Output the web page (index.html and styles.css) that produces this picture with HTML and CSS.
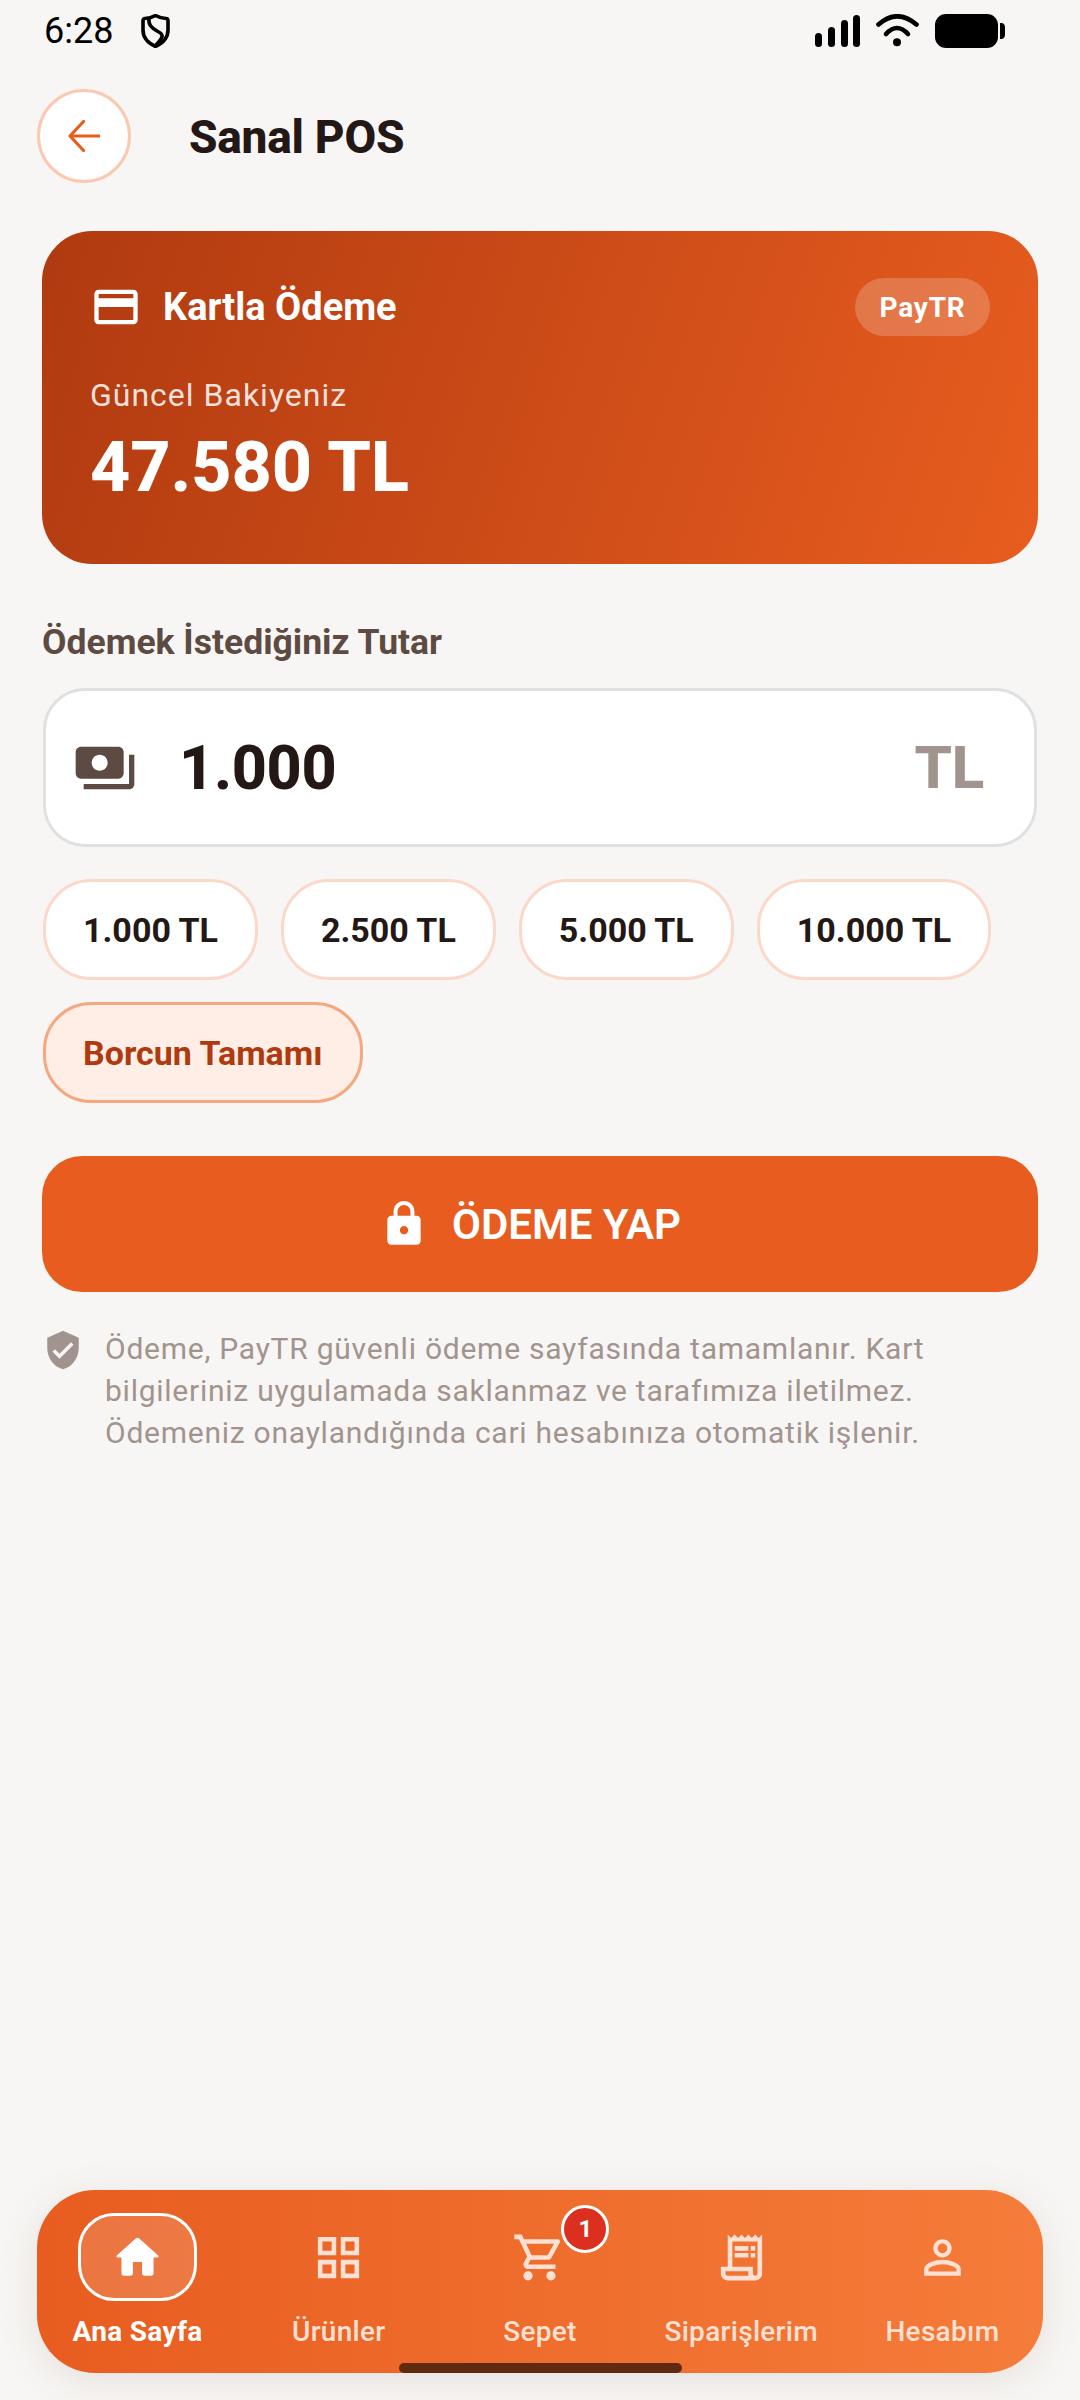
FILE: index.html
```html
<!DOCTYPE html>
<html lang="tr">
<head>
<meta charset="utf-8">
<title>Sanal POS</title>
<link rel="stylesheet" href="styles.css">
</head>
<body>
<div class="screen">
  <div class="status">
    <span class="time">6:28</span>
    <svg class="shield-st" viewBox="0 0 29 34"><path d="M14.5 1.5 C18 3.5 22 4.5 25 4.5 C26.5 4.5 27 5.5 27 7 V16 C27 24 21 29.5 14.5 32.5 C8 29.5 2 24 2 16 V7 C2 5.5 2.5 4.5 4 4.5 C7 4.5 11 3.5 14.5 1.5 Z" fill="none" stroke="#000" stroke-width="3.6" stroke-linejoin="round"/><path d="M8 4 C7 11 11 14 16 17 C22 20 24 22 15 31" fill="none" stroke="#000" stroke-width="3.6"/></svg>
    <span class="status-gap"></span>
    <svg class="signal" viewBox="0 0 46 32"><g fill="#000"><rect x="0" y="18" width="7" height="14" rx="3.5"/><rect x="13" y="12" width="7" height="20" rx="3.5"/><rect x="26" y="5" width="7" height="27" rx="3.5"/><rect x="38" y="0" width="7" height="32" rx="3.5"/></g></svg>
    <svg class="wifi" viewBox="0 0 43 33"><g fill="none" stroke="#000" stroke-width="4.6" stroke-linecap="round"><path d="M2.5 10.5 Q21 -5.9 40.5 10.5"/><path d="M10 20 Q21 8 32 20"/></g><circle cx="21" cy="28.3" r="4" fill="#000"/></svg>
    <svg class="battery" viewBox="0 0 70 34"><rect x="0" y="0" width="63" height="34" rx="11" fill="#000"/><path d="M65 9h1.5c2 0 3.5 2 3.5 4v8c0 2-1.5 4-3.5 4H65z" fill="#000"/></svg>
  </div>

  <div class="header">
    <button class="back" type="button" aria-label="Geri">
      <svg viewBox="0 0 32 32" class="back-ic"><path d="M31 16H2M15.5 1.5 2 16l13.5 14.5" fill="none" stroke="#E85D1F" stroke-width="3.2" stroke-linecap="round" stroke-linejoin="round"/></svg>
    </button>
    <h1 class="title">Sanal POS</h1>
  </div>

  <main class="content">
    <section class="card">
      <div class="card-top">
        <svg class="ic-card" viewBox="0 0 24 24"><path fill="#fff" d="M20 4H4c-1.11 0-1.99.89-1.99 2L2 18c0 1.11.89 2 2 2h16c1.11 0 2-.89 2-2V6c0-1.11-.89-2-2-2zm0 14H4v-6h16v6zm0-10H4V6h16v2z"/></svg>
        <span class="card-title">Kartla Ödeme</span>
        <span class="paytr">PayTR</span>
      </div>
      <div class="balance-label">Güncel Bakiyeniz</div>
      <div class="balance">47.580 TL</div>
    </section>

    <label class="amount-label">Ödemek İstediğiniz Tutar</label>
    <div class="amount-box">
      <svg class="ic-pay" viewBox="0 0 24 24"><path fill="#5D4A42" d="M19 14V6c0-1.1-.9-2-2-2H3c-1.1 0-2 .9-2 2v8c0 1.1.9 2 2 2h14c1.1 0 2-.9 2-2zm-9-1c-1.66 0-3-1.34-3-3s1.34-3 3-3 3 1.34 3 3-1.34 3-3 3zm13-6v11c0 1.1-.9 2-2 2H4v-2h17V7h2z"/></svg>
      <span class="amount-value">1.000</span>
      <span class="amount-unit">TL</span>
    </div>

    <div class="chips">
      <span class="chip">1.000 TL</span>
      <span class="chip">2.500 TL</span>
      <span class="chip">5.000 TL</span>
      <span class="chip">10.000 TL</span>
      <span class="chip chip-active">Borcun Tamamı</span>
    </div>

    <button class="pay" type="button">
      <svg class="ic-lock" viewBox="0 0 24 24"><path fill="#fff" d="M18 8h-1V6c0-2.76-2.24-5-5-5S7 3.24 7 6v2H6c-1.1 0-2 .9-2 2v10c0 1.1.9 2 2 2h12c1.1 0 2-.9 2-2V10c0-1.1-.9-2-2-2zm-6 9c-1.1 0-2-.9-2-2s.9-2 2-2 2 .9 2 2-.9 2-2 2zm3.1-9H8.9V6c0-1.71 1.39-3.1 3.1-3.1 1.71 0 3.1 1.39 3.1 3.1v2z"/></svg>
      <span>ÖDEME YAP</span>
    </button>

    <div class="note">
      <svg class="ic-verified" viewBox="0 0 24 24"><path fill="#A1948E" d="M12 1L3 5v6c0 5.55 3.84 10.74 9 12 5.16-1.26 9-6.45 9-12V5l-9-4zm-2 16l-4-4 1.41-1.41L10 14.17l6.59-6.59L18 9l-8 8z"/></svg>
      <p class="note-text">Ödeme, PayTR güvenli ödeme sayfasında tamamlanır. Kart<br>bilgileriniz uygulamada saklanmaz ve tarafımıza iletilmez.<br>Ödemeniz onaylandığında cari hesabınıza otomatik işlenir.</p>
    </div>
  </main>

  <nav class="nav">
    <div class="nav-item nav-active">
      <span class="nav-icon pill">
        <svg class="nav-svg" viewBox="0 0 24 24"><path fill="#fff" d="M10 19v-5h4v5c0 .55.45 1 1 1h3c.55 0 1-.45 1-1v-7h1.7c.46 0 .68-.57.33-.87L12.67 3.6c-.38-.34-.96-.34-1.34 0l-8.36 7.53c-.34.3-.13.87.33.87H5v7c0 .55.45 1 1 1h3c.55 0 1-.45 1-1z"/></svg>
      </span>
      <span class="nav-label">Ana Sayfa</span>
    </div>
    <div class="nav-item">
      <span class="nav-icon">
        <svg class="nav-svg" viewBox="0 0 24 24"><path class="soft" d="M3 3v8h8V3H3zm6 6H5V5h4v4zm-6 4v8h8v-8H3zm6 6H5v-4h4v4zm4-16v8h8V3h-8zm6 6h-4V5h4v4zm-6 4v8h8v-8h-8zm6 6h-4v-4h4v4z"/></svg>
      </span>
      <span class="nav-label">Ürünler</span>
    </div>
    <div class="nav-item">
      <span class="nav-icon">
        <svg class="nav-svg" viewBox="0 0 24 24"><path class="soft" d="M15.55 13c.75 0 1.41-.41 1.75-1.03l3.58-6.49c.37-.66-.11-1.48-.87-1.48H5.21l-.94-2H1v2h2l3.6 7.59-1.35 2.44C4.52 15.37 5.48 17 7 17h12v-2H7l1.1-2h7.45zM6.16 6h12.15l-2.76 5H8.53L6.16 6zM7 18c-1.1 0-1.99.9-1.99 2S5.9 22 7 22s2-.9 2-2-.9-2-2-2zm10 0c-1.1 0-1.99.9-1.99 2s.89 2 1.99 2 2-.9 2-2-.9-2-2-2z"/></svg>
        <span class="badge">1</span>
      </span>
      <span class="nav-label">Sepet</span>
    </div>
    <div class="nav-item">
      <span class="nav-icon">
        <svg class="nav-svg" viewBox="0 0 24 24"><path class="soft" d="M19.5 3.5L18 2l-1.5 1.5L15 2l-1.5 1.5L12 2l-1.5 1.5L9 2 7.5 3.5 6 2v14H3v3c0 1.66 1.34 3 3 3h12c1.66 0 3-1.34 3-3V2l-1.5 1.5zM19 19c0 .55-.45 1-1 1s-1-.45-1-1v-3H8V5h11v14zM5 19v-1h10v2H6c-.55 0-1-.45-1-1zM9 7h6v2H9zM16 7h2v2h-2zM9 10h6v2H9zM16 10h2v2h-2z"/></svg>
      </span>
      <span class="nav-label">Siparişlerim</span>
    </div>
    <div class="nav-item">
      <span class="nav-icon">
        <svg class="nav-svg" viewBox="0 0 24 24"><path class="soft" d="M12 5.9c1.16 0 2.1.94 2.1 2.1s-.94 2.1-2.1 2.1S9.9 9.16 9.9 8s.94-2.1 2.1-2.1m0 9c2.97 0 6.1 1.46 6.1 2.1v1.1H5.9V17c0-.64 3.13-2.1 6.1-2.1M12 4C9.79 4 8 5.79 8 8s1.79 4 4 4 4-1.79 4-4-1.79-4-4-4zm0 9c-2.67 0-8 1.34-8 4v3h16v-3c0-2.66-5.33-4-8-4z"/></svg>
      </span>
      <span class="nav-label">Hesabım</span>
    </div>
    <span class="home-bar"></span>
  </nav>
</div>
</body>
</html>
```

FILE: styles.css
```css
* { box-sizing: border-box; }
html, body { margin: 0; padding: 0; }
body { font-family: Roboto, "Noto Sans", sans-serif; background: #F8F6F4; }
.screen { position: relative; width: 1080px; height: 2400px; display: flex; flex-direction: column; background: #F8F6F4; color: #231815; overflow: hidden; }

.status { height: 62px; padding: 14px 75px 0 44px; display: flex; align-items: flex-start; flex: none; }
.time { font-size: 36px; line-height: 34px; color: #000; width: 97px; }
.shield-st { width: 29px; height: 34px; }
.status-gap { flex: 1; }
.signal { width: 46px; height: 32px; margin-top: 1px; }
.wifi { width: 43px; height: 33px; margin: 0 16px 0 15px; }
.battery { width: 70px; height: 34px; }

.header { display: flex; align-items: center; gap: 58px; margin: 27px 0 0 37px; flex: none; }
.back { width: 94px; height: 94px; border-radius: 50%; background: #fff; border: 3px solid #FBC9B0; padding: 0; display: flex; align-items: center; justify-content: center; }
.back-ic { width: 32px; height: 32px; margin-left: -1px; }
.title { margin: 2px 0 0; font-size: 46px; line-height: 54px; font-weight: 800; letter-spacing: -.25px; color: #231815; }

.content { flex: 1; padding: 48px 42px 0; display: flex; flex-direction: column; align-items: stretch; }
.card { height: 333px; border-radius: 50px; padding: 47px 48px 0; color: #fff; background: linear-gradient(108.5deg, #B03A10, #E85D1F); }
.card-top { display: flex; align-items: center; height: 58px; }
.ic-card { width: 52px; height: 52px; margin-right: 21px; flex: none; }
.card-title { font-size: 38px; font-weight: 700; flex: 1; }
.paytr { width: 135px; height: 58px; border-radius: 29px; background: rgba(255,255,255,.2); font-size: 28px; font-weight: 700; letter-spacing: .8px; display: flex; align-items: center; justify-content: center; }
.balance-label { margin-top: 41px; font-size: 32px; line-height: 36px; letter-spacing: 1px; color: rgba(255,255,255,.85); }
.balance { margin-top: 13px; font-size: 70px; line-height: 82px; font-weight: 800; letter-spacing: -.1px; }

.amount-label { margin-top: 57px; font-size: 35.5px; line-height: 42px; font-weight: 700; color: #5D4A42; display: block; }
.amount-box { margin: 25px 1px 0; height: 159px; border-radius: 42px; background: #fff; border: 3px solid #E0E0E0; display: flex; align-items: center; padding: 0 50px 0 27px; }
.ic-pay { width: 64px; height: 64px; flex: none; }
.amount-value { margin-left: 42px; flex: 1; font-size: 61px; font-weight: 800; letter-spacing: -.3px; color: #231815; }
.amount-unit { font-size: 60px; font-weight: 800; letter-spacing: -.3px; color: #A1948E; }

.chips { margin: 32px 1px 0; display: flex; flex-wrap: wrap; gap: 22px 23px; }
.chip { height: 101px; padding: 0 37px; border-radius: 48px; border: 3px solid #FBD8C8; background: #fff; font-size: 34px; font-weight: 700; color: #231815; display: flex; align-items: center; }
.chip-active { background: #FEEEE6; border-color: #F5A77F; color: #B03A10; }

.pay { margin-top: 53px; height: 136px; border: 0; padding: 0 20px 0 0; border-radius: 40px; background: #E85D1F; color: #fff; font-family: inherit; font-size: 42px; font-weight: 600; display: flex; align-items: center; justify-content: center; gap: 23px; }
.ic-lock { width: 50px; height: 50px; }

.note { margin-top: 36px; display: flex; align-items: flex-start; gap: 21px; }
.ic-verified { width: 42px; height: 42px; flex: none; margin-top: 1px; }
.note-text { margin: 0; font-size: 30px; line-height: 42px; letter-spacing: .75px; color: #A1948E; }

.nav { position: relative; margin: 0 37px 27px; height: 183px; border-radius: 58px; display: grid; grid-template-columns: repeat(5, 1fr); background: linear-gradient(90deg, #E85D1F, #F57C3A); box-shadow: 0 8px 40px rgba(93,64,55,.12); flex: none; }
.nav-item { display: flex; flex-direction: column; align-items: center; padding-top: 23px; }
.nav-icon { position: relative; width: 119px; height: 88px; display: flex; align-items: center; justify-content: center; border-radius: 36px; border: 3px solid transparent; }
.pill { background: rgba(255,255,255,.15); border-color: #fff; }
.nav-svg { width: 55px; height: 55px; }
.soft { fill: #FFE0D2; }
.nav-label { margin-top: 16px; font-size: 28px; line-height: 30px; font-weight: 500; letter-spacing: .3px; color: #FFE0D2; white-space: nowrap; }
.nav-active .nav-label { color: #fff; font-weight: 700; }
.badge { position: absolute; left: 78px; top: -11px; width: 48px; height: 48px; border-radius: 50%; background: #DC2F20; border: 3px solid #fff; color: #fff; font-size: 24px; font-weight: 700; display: flex; align-items: center; justify-content: center; }
.home-bar { position: absolute; left: 362px; bottom: 0; width: 283px; height: 10px; border-radius: 5px; background: #5F2A10; }
```
